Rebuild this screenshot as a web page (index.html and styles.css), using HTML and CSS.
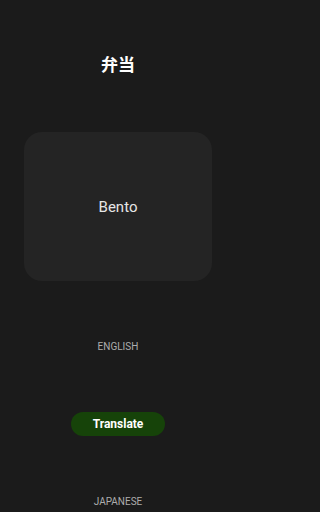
FILE: index.html
```html
<!DOCTYPE html>
<html lang="ja">
<head>
<meta charset="utf-8">
<link rel="stylesheet" href="styles.css">
</head>
<body>
<main class="screen">
  <h1 class="title">弁当</h1>
  <section class="card"><p class="card-text">Bento</p></section>
  <p class="lang">ENGLISH</p>
  <button class="translate">Translate</button>
  <p class="lang lang-bottom">JAPANESE</p>
</main>
</body>
</html>
```
FILE: styles.css
```css
html, body {
  margin: 0;
  padding: 0;
  background: #1b1b1b;
}
.screen {
  display: flex;
  flex-direction: column;
  align-items: center;
  width: 236px;
  height: 512px;
  overflow: hidden;
  padding-top: 52px;
  box-sizing: border-box;
  font-family: Roboto, "Noto Sans", sans-serif;
}
.title {
  margin: 0;
  font-family: "Noto Sans CJK JP", sans-serif;
  font-size: 17px;
  line-height: 24px;
  font-weight: 700;
  color: #ffffff;
}
.card {
  margin-top: 56px;
  width: 188px;
  height: 149px;
  background: #242424;
  border-radius: 18px;
  display: flex;
  align-items: center;
  justify-content: center;
}
.card-text {
  margin: 0;
  font-size: 15px;
  line-height: 20px;
  color: #e6e6e6;
}
.lang {
  margin: 59px 0 0;
  font-size: 10px;
  line-height: 14px;
  color: #adadad;
}
.translate {
  margin-top: 58px;
  width: 94px;
  height: 24px;
  border: none;
  border-radius: 12px;
  background: #164309;
  color: #ffffff;
  font-family: Roboto, sans-serif;
  font-weight: 700;
  font-size: 12px;
  padding: 0;
}
.lang-bottom {
  margin-top: 59px;
}
```
